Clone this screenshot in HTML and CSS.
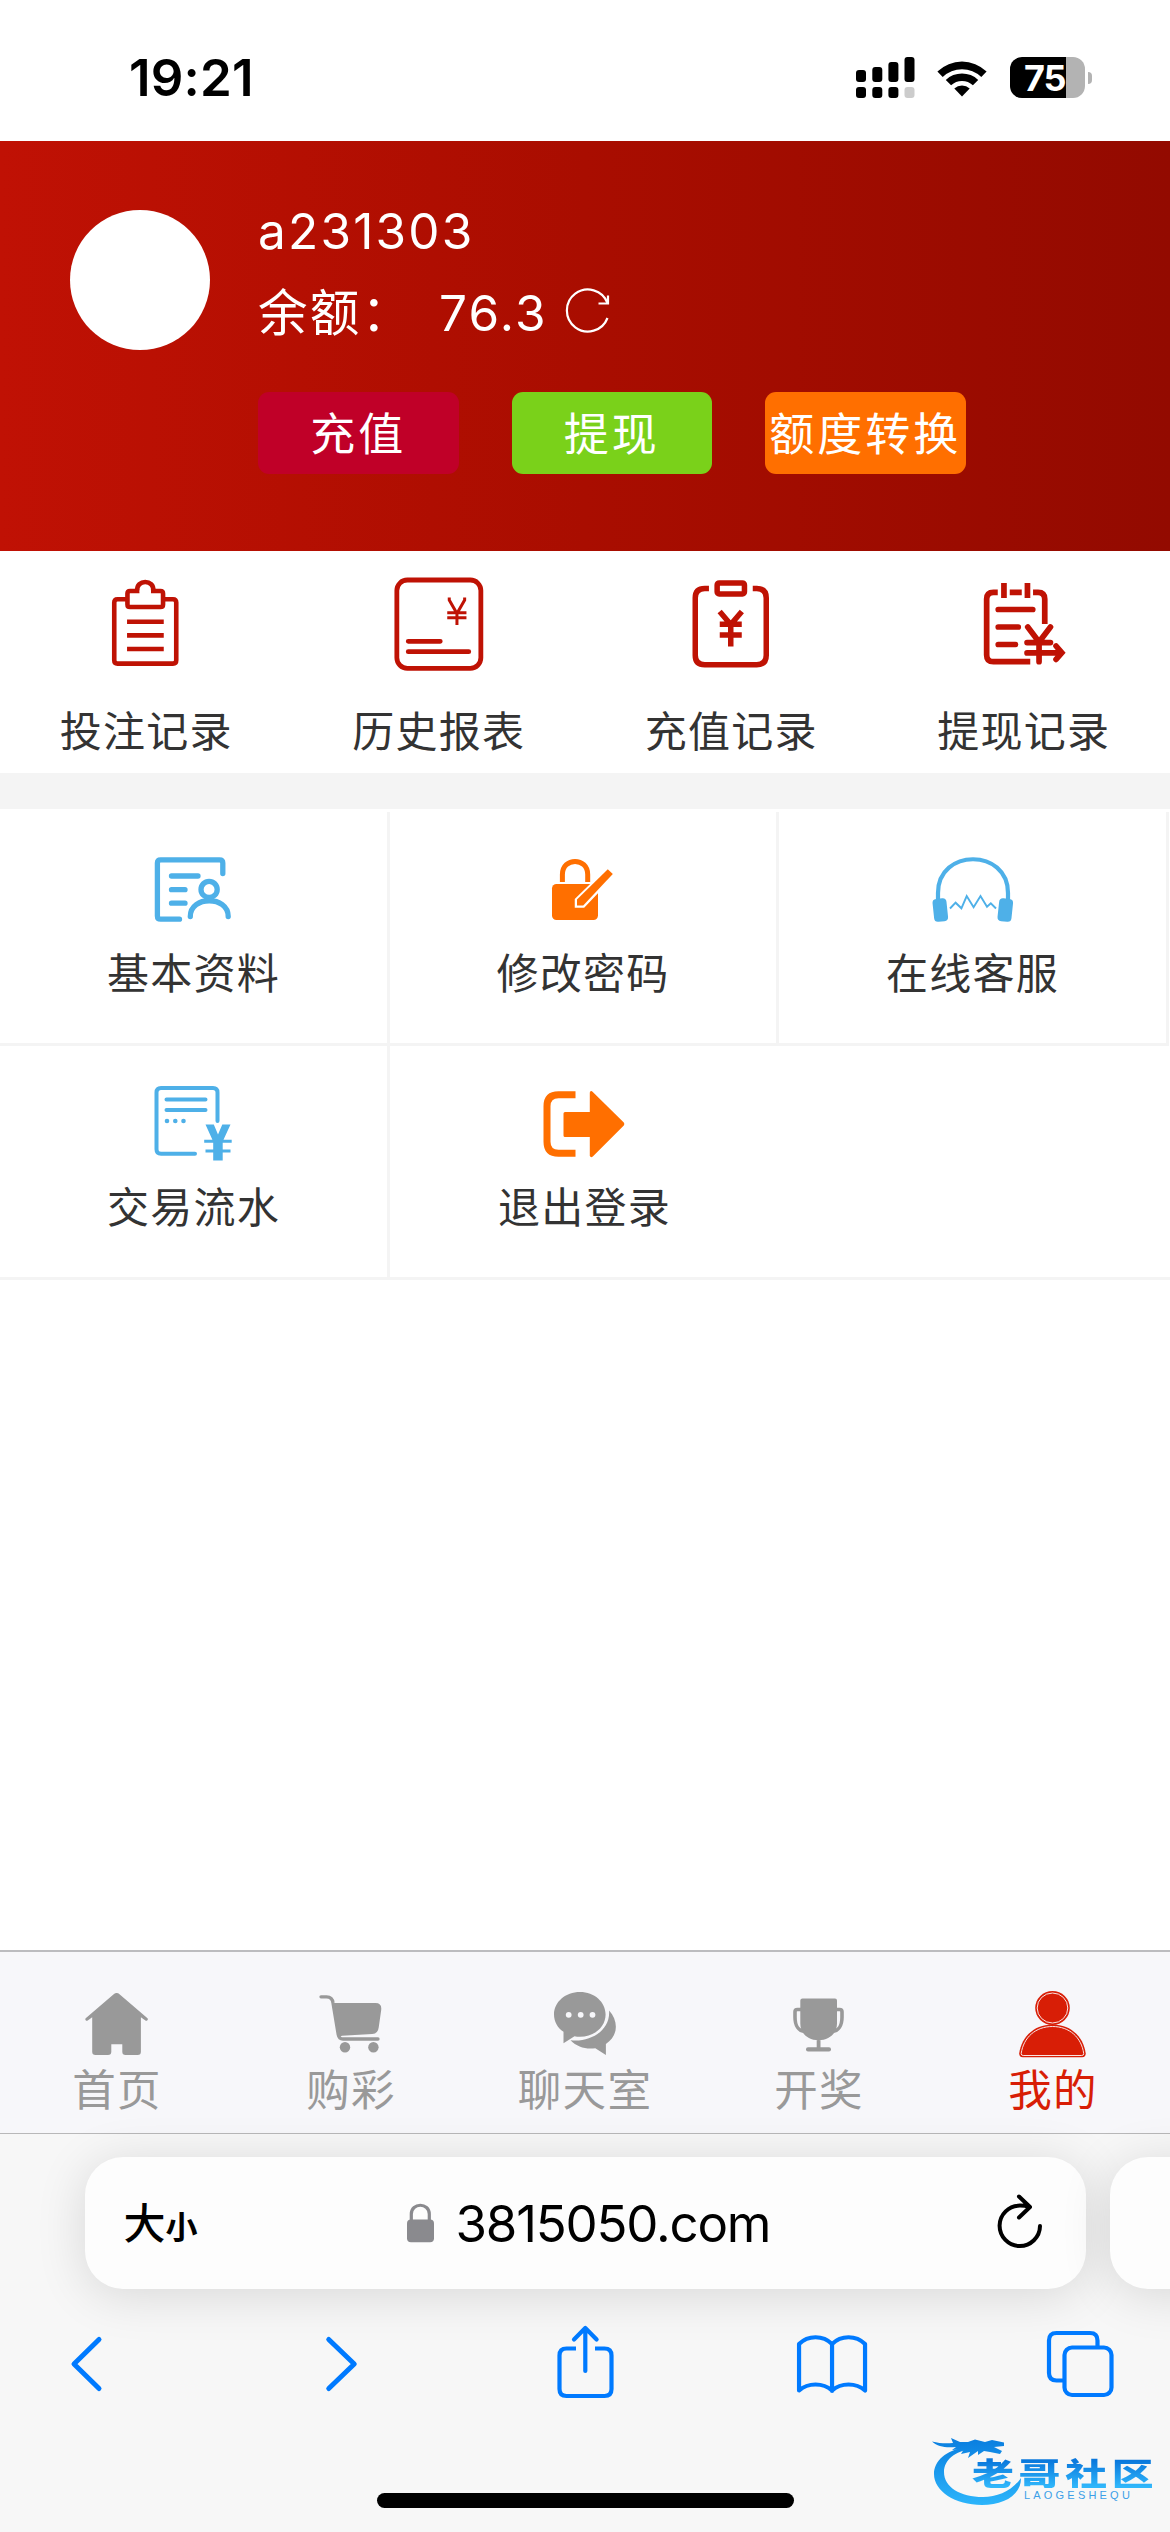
FILE: index.html
```html
<!DOCTYPE html>
<html lang="zh-CN">
<head>
<meta charset="utf-8">
<title>我的</title>
<link rel="stylesheet" href="styles.css">
</head>
<body>
<div class="phone">
  <header class="status">
    <span class="clock">19:21</span>
    <svg class="signal" viewBox="856 57 59 42" width="59" height="42">
      <rect x="856" y="70" width="10" height="12" rx="3"/><rect x="872.3" y="67" width="10" height="15" rx="3"/>
      <rect x="888.4" y="62" width="10" height="20" rx="3"/><rect x="904.5" y="57" width="10" height="25" rx="3"/>
      <rect x="856" y="87" width="10" height="11" rx="3"/><rect x="872.3" y="87" width="10" height="11" rx="3"/>
      <rect x="888.4" y="87" width="10" height="11" rx="3"/><rect x="904.5" y="87" width="10" height="11" rx="3" fill="#ccc"/>
    </svg>
    <svg class="wifi" viewBox="936 58 52 40" width="52" height="40">
      <path d="M937.4 71.5a35.500 35.500 0 0 1 49.200 0l-5.300 5.400a28 28 0 0 0-38.600 0z"/>
      <path d="M945.800 79.900a23.500 23.500 0 0 1 32.400 0l-5.300 5.400a16 16 0 0 0-21.800 0z"/>
      <path d="M954.300 88.400a11.500 11.500 0 0 1 15.400 0l-7.700 8z"/>
    </svg>
    <div class="battery"><span>75</span></div>
    <i class="nub"></i>
  </header>

  <section class="profile">
    <div class="avatar"></div>
    <div class="account">
      <div class="name">a231303</div>
      <div class="balance"><span>余额：</span><span class="amount">76.3</span>
        <svg viewBox="562 288 50 50" width="50" height="50" fill="none" stroke="#fff" stroke-width="2.200">
          <path d="M606.500 303A21 21 0 1 0 606.500 318"/><path d="M607 295.500v8h-9.500"/>
        </svg>
      </div>
      <div class="actions">
        <button class="btn crimson">充值</button>
        <button class="btn green">提现</button>
        <button class="btn orange">额度转换</button>
      </div>
    </div>
  </section>

  <nav class="records">
    <a class="record">
      <svg viewBox="96.250 573 100 100" width="100" height="100" fill="none" stroke="#bf1204" stroke-width="4.600">
        <path d="M127 599.300h-9.200q-3.300 0-3.300 3.300v57.700q0 3.300 3.300 3.300h55.400q3.300 0 3.300-3.300v-57.700q0-3.300-3.300-3.300H164"/>
        <path d="M137.500 591h-7.200q-2.600 0-2.600 2.600v10.800q0 2.600 2.600 2.600h30.400q2.600 0 2.600-2.600v-10.800q0-2.600-2.600-2.600h-7.200c1.500-12-17.500-12-16 0z" />
        <path d="M127.300 621.800H164M127.300 635.400H164M127.300 649H164"/>
        <path d="M139.800 593h11.400" stroke="#fff" stroke-width="5"/>
      </svg>
      <span>投注记录</span>
    </a>
    <a class="record">
      <svg viewBox="388.750 573 100 100" width="100" height="100" fill="none" stroke="#bf1204" stroke-width="4.800">
        <rect x="396.600" y="580" width="84" height="88.300" rx="10.500"/>
        <path stroke-linecap="round" d="M408 641.300h32M408 651.700h60.500"/>
        <path stroke-width="3" d="M449 597.500v2.500l7.700 13.500 7.700-13.500v-2.500M456.700 612v13M447 612.700h19.200M447 617.800h19.200"/>
      </svg>
      <span>历史报表</span>
    </a>
    <a class="record">
      <svg viewBox="680.750 573 100 100" width="100" height="100" fill="none" stroke="#bf1204" stroke-width="5.500">
        <path d="M708.700 588.500h-4.200q-9.500 0-9.500 9.500v57.200q0 9.500 9.500 9.500h52q9.500 0 9.500-9.500V598q0-9.500-9.500-9.500h-4"/>
        <rect x="716.900" y="582.900" width="27.300" height="11" rx="2"/>
        <path d="M719.400 611.500l11.100 13 11.100-13M730.500 624v22.600M719.500 624.200h22M719.500 635h22"/>
      </svg>
      <span>充值记录</span>
    </a>
    <a class="record">
      <svg viewBox="973.250 573 100 100" width="100" height="100" fill="none" stroke="#bf1204" stroke-width="5.700">
        <path d="M997 592.300h-4.300q-6.800 0-6.800 6.800v55.800q0 6.800 6.800 6.800H1029.500M1032.300 592.300h5q6.700 0 6.700 6.800V624M1003.200 583v15M1026.700 583v15M1009 592.300h12"/>
        <g stroke-linecap="round"><path d="M997.500 609.500h34.500M997.500 627h20M997.500 644.500h17.200"/>
        <path d="M1027 627l11.300 15 11.400-15M1038.300 642v19.700M1026.300 642.600h23.400M1026.300 652.900h34M1055.300 646l5.800 6.800-5.800 6.600"/></g>
      </svg>
      <span>提现记录</span>
    </a>
  </nav>

  <nav class="services">
    <a class="service">
      <svg viewBox="143.500 840 100 100" width="100" height="100" fill="none" stroke="#4eb0e8" stroke-width="5.300" stroke-linecap="round">
        <path d="M222.300 873.500v-10.500q0-3.200-3.200-3.200h-59q-3.200 0-3.200 3.200v53q0 3.200 3.200 3.200H179M171 876h26.500M171 889.700h13.500M171 903.200h13.500"/>
        <ellipse cx="208.600" cy="889.400" rx="8.100" ry="8"/>
        <path d="M189.800 916.500c0-21 37.900-21 37.900 0"/>
      </svg>
      <span>基本资料</span>
    </a>
    <a class="service">
      <svg viewBox="533 840 100 100" width="100" height="100" fill="#ff6f00">
        <path fill="none" stroke="#ff6f00" stroke-width="5" d="M562.400 882v-7.500c0-17.500 25.300-17.500 25.300 0v7.500"/>
        <rect x="552" y="884" width="46" height="36" rx="4.500"/>
        <path stroke="#fff" stroke-width="4.500" d="M604 873.500L577 900v5.500h6.200l29.500-31z"/>
        <path d="M607.800 869.300l5 4.700-29.600 31.500h-6.200v-6z"/>
      </svg>
      <span>修改密码</span>
    </a>
    <a class="service">
      <svg viewBox="922 840 100 100" width="100" height="100" fill="#4eb0e8">
        <path fill="none" stroke="#4eb0e8" stroke-width="4.200" d="M937 902v-9c0-45 70-45 70 0v9"/>
        <rect x="932.300" y="898.500" width="14" height="23" rx="4" transform="rotate(-6 939.500 910)"/>
        <rect x="997.300" y="898.500" width="14" height="23" rx="4" transform="rotate(6 1003.500 910)"/>
        <path fill="none" stroke="#4eb0e8" stroke-width="1.900" d="M949 908.500l5.600-5.800 5.800 5.600 5.300-12.300 6.900 11.300 6.900-11.300 6.500 10.700 3.800-3.400 5.200 5.200"/>
      </svg>
      <span>在线客服</span>
    </a>
    <a class="service">
      <svg viewBox="143.500 1074 100 100" width="100" height="100" fill="#4eb0e8">
        <path fill="none" stroke="#4eb0e8" stroke-width="4" stroke-linecap="round" d="M194.500 1153.800h-34q-4.500 0-4.500-4.500v-56.800q0-4.500 4.500-4.500h52q4.500 0 4.500 4.500v28.500M166 1099.500h39M166 1110h39"/>
        <circle cx="166.500" cy="1121" r="2.300"/><circle cx="174.800" cy="1121" r="2.300"/><circle cx="183" cy="1121" r="2.300"/>
        <path d="M205 1124.500h8.300l4.200 10 4.300-10h8.200l-7.800 17v19h-9.500v-19zM203.700 1139.800h27.500v3h-27.500zM205 1149.500h25v3h-25z"/>
      </svg>
      <span>交易流水</span>
    </a>
    <a class="service last">
      <svg viewBox="534.500 1074 100 100" width="100" height="100" fill="#ff6f00">
        <path fill="none" stroke="#ff6f00" stroke-width="7" d="M575 1094.700h-17q-11.500 0-11.500 11.500v35.600q0 11.500 11.500 11.500h17"/>
        <path d="M564.500 1112h24.800v-19.500q1-2.500 3-.5l31 30.500q1.200 1.500 0 3l-31 31q-2 1.500-3-.5v-19h-24.800q-1.500 0-1.500-1.500v-22q0-1.500 1.500-1.500z"/>
      </svg>
      <span>退出登录</span>
    </a>
    <div class="service blank"></div>
  </nav>

  <main class="space"></main>

  <nav class="tabs">
    <a class="tab">
      <svg viewBox="77 1984 80 80" width="80" height="80" fill="#999">
        <path d="M116.700 1993q1.600 0 2.800 1.200l28 24q.8 1-.1 2t-2 .2l-4.500-3.200v34.500q0 3.300-3.300 3.300h-12q-3.300 0-3.300-3.300v-7.500h-11v7.500q0 3.300-3.300 3.300h-12.500q-3.300 0-3.300-3.300v-34.500l-4.500 3.200q-1.200.7-2-.2t0-2l28-24q1.300-1.200 3-1.200z"/>
      </svg>
      <span>首页</span>
    </a>
    <a class="tab">
      <svg viewBox="311 1984 80 80" width="80" height="80" fill="#999">
        <path d="M334 2003h41.500q6.500 0 5.700 7l-2.500 17.500q-.8 6.500-6.500 6.500L342 2035.800q-3 1-.5 1.800l-4 -2z"/>
        <path fill="none" stroke="#999" stroke-width="3.300" stroke-linecap="round" d="M321 1996.800h5.500q6 0 6.500 6.200l5.200 31.500q.8 4.500 4.800 4.500h35"/>
        <ellipse cx="345" cy="2047.200" rx="5.200" ry="5.200"/><ellipse cx="373.400" cy="2047.200" rx="5.200" ry="5.200"/>
      </svg>
      <span>购彩</span>
    </a>
    <a class="tab">
      <svg viewBox="544.500 1984 80 80" width="80" height="80" fill="#999">
        <path d="M579.500 1992c14.300 0 25.600 10 25.600 22.400s-11.300 22.400-25.600 22.400q-3 0-5.500-.6l-11 7v-11.400c-6-4.200-9.500-10.300-9.500-17.400 0-12.400 11.500-22.400 26-22.400z"/>
        <path d="M608.600 2010.500c9.500 10.500 9.500 25-3.200 33.500v11l-10.600-6.800c-9 1.500-18.300-1.200-24.800-8 19 2.500 40-9.200 38.600-29.700z"/>
        <g fill="#f7f7fa"><circle cx="568.200" cy="2014.800" r="2.900"/><circle cx="580.200" cy="2014.800" r="2.900"/><circle cx="592" cy="2014.800" r="2.900"/></g>
      </svg>
      <span>聊天室</span>
    </a>
    <a class="tab">
      <svg viewBox="779 1984 80 80" width="80" height="80" fill="#999">
        <path d="M802.500 1998.500h32.500q2 0 2 2v23c0 10-8 16.700-18.500 16.700s-18.200-6.700-18.200-16.700v-23q0-2 2.200-2zM816.700 2039h3.800v9h-3.800z"/>
        <rect x="806" y="2047.300" width="25" height="4.200" rx="2"/>
        <path fill="none" stroke="#999" stroke-width="3.600" d="M801.500 2009.500h-4.200q-2.300 0-2.300 2.300v5.500c0 8 3.500 14 10 14.200M835.500 2009.500h4.200q2.300 0 2.300 2.300v5.500c0 8-3.500 14-10 14.200"/>
      </svg>
      <span>开奖</span>
    </a>
    <a class="tab active">
      <svg viewBox="1013 1984 80 80" width="80" height="80" fill="#d81e06">
        <ellipse cx="1052.500" cy="2008" rx="17.300" ry="17"/>
        <path d="M1052.500 2024.500c18 0 31 12 33.200 29q0 3.700-3.500 3.700h-59.500q-3.500 0-3.500-3.700c2.300-17 15.300-29 33.300-29z"/>
        <g fill="none" stroke="#f9e4e3" stroke-width="1"><ellipse cx="1052.500" cy="2008" rx="15.300" ry="15"/>
        <path d="M1052.500 2026.500c17 0 29 11 31.200 27q.2 2-2 2h-58.500q-2 0-2-2c2.300-16 14.300-27 31.300-27z"/></g>
      </svg>
      <span>我的</span>
    </a>
  </nav>

  <footer class="safari">
    <div class="address-row">
      <div class="address">
        <span class="size"><b>大</b><small>小</small></span>
        <svg class="lock" viewBox="406 2202 30 42" width="30" height="42"><rect x="407" y="2219.500" width="27" height="22.800" rx="4" fill="#8a8a8e"/><path d="M411.300 2220v-6c0-11.700 18 -11.700 18 0v6" fill="none" stroke="#8a8a8e" stroke-width="3.200"/></svg>
        <span class="url">3815050.com</span>
        <svg class="reload" viewBox="996 2190 50 62" width="50" height="62" fill="none" stroke="#000" stroke-width="4" stroke-linecap="round" stroke-linejoin="round">
          <path d="M1029 2206.800c-2.500-.8-5-1.200-9-1.200A20.200 20.200 0 1 0 1040 2226M1019 2196.500l11 10.500-11 10.500"/>
        </svg>
      </div>
      <div class="address next"></div>
    </div>
    <div class="toolbar">
      <svg viewBox="46.500 2322 80 80"><path stroke-width="5" d="M98.500 2339.500L73.500 2364l25 24.500"/></svg>
      <svg viewBox="294.750 2322 80 80"><path stroke-width="5" d="M328.500 2339.500L354 2364l-25.500 24.500"/></svg>
      <svg viewBox="543 2322 80 80"><path stroke-linecap="butt" d="M576 2348.500h-9.500q-7 0-7 7v33.500q0 7 7 7h38q7 0 7-7v-33.500q0-7-7-7H595"/><path d="M585.300 2371V2329M574 2339.500l11.300-11.500 11.300 11.500"/></svg>
      <svg viewBox="791.250 2322 80 80"><path d="M832.300 2344c-9-9-24-9-33 0v46.500c9-8 24-8 33 0c9-8 24-8 33 0V2344c-9-9-24-9-33 0zV2391"/></svg>
      <svg viewBox="1039.500 2322 80 80"><path d="M1062 2380.500h-6q-7.500 0-7.500-7.500v-32.500q0-7.500 7.500-7.500h33.500q7.500 0 7.500 7.500v6.500"/><rect x="1064" y="2347.500" width="47" height="47.500" rx="7.500"/></svg>
    </div>
    <div class="home-bar"></div>
  </footer>

  <div class="watermark">
    <svg viewBox="930 2430 100 80" width="100" height="80">
      <defs><linearGradient id="wave" gradientUnits="userSpaceOnUse" x1="0" y1="2440" x2="0" y2="2505"><stop offset="0" stop-color="#0a7fe0"/><stop offset="1" stop-color="#2cb5fb"/></linearGradient></defs>
      <g fill="url(#wave)">
        <path d="M966 2447C946 2450 934 2461 934 2474C934 2491 955 2505 982 2505C1003 2505 1021 2496 1021 2478C1012 2491 998 2497 983 2497C960 2497 944 2487 944 2472C944 2460 955 2451 972 2449z"/>
        <path d="M932 2441.500c8 2 14 2 21 1.500l-2-5 9 4h8l7-2.500 10 2.500 7-2 12 2.500v3.500l-10 1 8 4-2 3-10-2-6-1-6 4v-4l-10 7 2-6-9 2 3-5-12 1 4-3c-10 1-18 0-24-5.500z"/>
      </g>
    </svg>
    <strong>老哥社区</strong>
    <em>LAOGESHEQU</em>
  </div>
</div>
</body>
</html>
```
FILE: styles.css
```css
* { box-sizing: border-box; }
body { margin: 0; background: #fff; }
svg { display: block; flex: none; }
.phone {
  position: relative;
  width: 1170px;
  height: 2532px;
  overflow: hidden;
  display: flex;
  flex-direction: column;
  font-family: "Noto Sans CJK SC", sans-serif;
  color: #333;
}
.phone > * { flex: none; }

/* status bar */
.status { height: 141px; display: flex; padding: 57px 0 0 129px; align-items: flex-start; }
.clock { width: 727px; font: 600 51px/42px Inter, sans-serif; color: #000; letter-spacing: 0.200px; }
.wifi { margin-left: 21px; margin-top: 1px; }
.battery {
  margin-left: 22px; width: 75px; height: 41px; border-radius: 12px;
  background: linear-gradient(90deg, #000 56px, #b3b3b3 56px);
  color: #fff; font: 700 36px/42px Inter, sans-serif; padding-left: 14px; letter-spacing: -1px;
}
.nub { width: 4px; height: 12px; margin: 15px 0 0 3px; border-radius: 0 4px 4px 0; background: #b3b3b3; }

/* account header */
.profile {
  height: 410px; display: flex; gap: 48px; padding: 60px 0 0 70px;
  background: linear-gradient(90deg, #c01104, #a90d00 50%, #930a00);
}
.avatar { width: 140px; height: 140px; margin-top: 9px; border-radius: 50%; background: #fff; }
.account { color: #fff; font-family: Inter, "Noto Sans CJK SC", sans-serif; font-size: 49.500px; line-height: 60px; letter-spacing: 2.200px; }
.balance { display: flex; align-items: center; margin-top: 22px; height: 60px; }
.amount { margin-left: 26px; }
.balance svg { margin-left: 15px; }
.actions { display: flex; gap: 53px; margin-top: 49px; }
.btn {
  width: 200.500px; height: 82px; padding: 0 0 2px; border: 0; border-radius: 11px; color: #fff;
  font: 400 45px/76px "Noto Sans CJK SC", sans-serif; letter-spacing: 3px; white-space: nowrap;
}
.crimson { background: #c00028; }
.green { background: #7ad11a; }
.orange { background: #ff6f00; }

/* record shortcuts */
.records { height: 258px; display: flex; border-bottom: 36px solid #f4f4f4; }
.record, .service, .tab { display: flex; flex-direction: column; align-items: center; }
.record { width: 25%; padding-top: 22px; }
.record span, .service span { font-size: 42px; line-height: 48px; letter-spacing: 1.200px; white-space: nowrap; }
.record span { margin-top: 32px; }

/* service grid */
.services { padding-top: 3px; display: grid; grid-template-columns: 390px 389px 390px 1px; grid-auto-rows: 234px; }
.service { border-right: 3px solid #f4f4f4; border-bottom: 3px solid #f4f4f4; padding-top: 28px; }
.service:nth-child(4) { grid-column: 1; }
.service span { margin-top: 7px; }
.last { border-right: 0; }
.blank { grid-column: 3 / 5; border-right: 0; }
.space { height: 670px; }

/* bottom tabs */
.tabs { height: 184px; display: flex; background: #f7f7fa; border-top: 2px solid #bcbcbf; border-bottom: 1px solid #b8b8b9; }
.tab { width: 20%; padding-top: 32px; color: #999; font-size: 43.500px; line-height: 48px; letter-spacing: 1.300px; }
.active { color: #d81e06; }

/* browser chrome */
.safari { height: 398px; background: #f7f7f7; padding-top: 23px; }
.address-row { display: flex; gap: 24px; padding-left: 84.500px; }
.address {
  flex: none; width: 1001.500px; height: 132px; border-radius: 38px; background: #fdfdfd;
  box-shadow: 0 6px 50px rgba(0, 0, 0, .13);
  display: flex; align-items: center; padding-left: 39px; color: #000;
}
.size { width: 282px; font-size: 42px; line-height: 50px; }
.size b { font-weight: 500; }
.size small { font-size: 32px; font-weight: 700; }
.url { margin-left: 20px; width: 540px; font: 400 51px/60px Inter, sans-serif; letter-spacing: -1.200px; margin-top: 2px; }
.reload { margin-top: -4px; }
.toolbar { display: flex; justify-content: space-between; padding: 33px 50.500px 0 46.500px; }
.toolbar svg { width: 80px; height: 80px; fill: none; stroke: #007aff; stroke-width: 4.200; stroke-linecap: round; stroke-linejoin: round; }
.home-bar { width: 417px; height: 15px; margin: 91px auto 0; border-radius: 8px; background: #000; }

/* community watermark over the page corner */
.watermark { position: absolute; left: 930px; top: 2430px; width: 230px; height: 80px; }
.watermark strong {
  position: absolute; left: 42px; top: 26px; font-size: 31px; line-height: 32px; font-weight: 900;
  letter-spacing: 3.500px; white-space: nowrap; transform: scaleX(1.350); transform-origin: 0 0;
  background: linear-gradient(#0a78dc 15%, #2fb6fb 95%); -webkit-background-clip: text; background-clip: text; color: transparent;
}
.watermark em {
  position: absolute; left: 94px; top: 59px; font: normal 500 11px/13px "Liberation Sans", sans-serif;
  color: #3b9fe8; letter-spacing: 3.200px;
}
```
